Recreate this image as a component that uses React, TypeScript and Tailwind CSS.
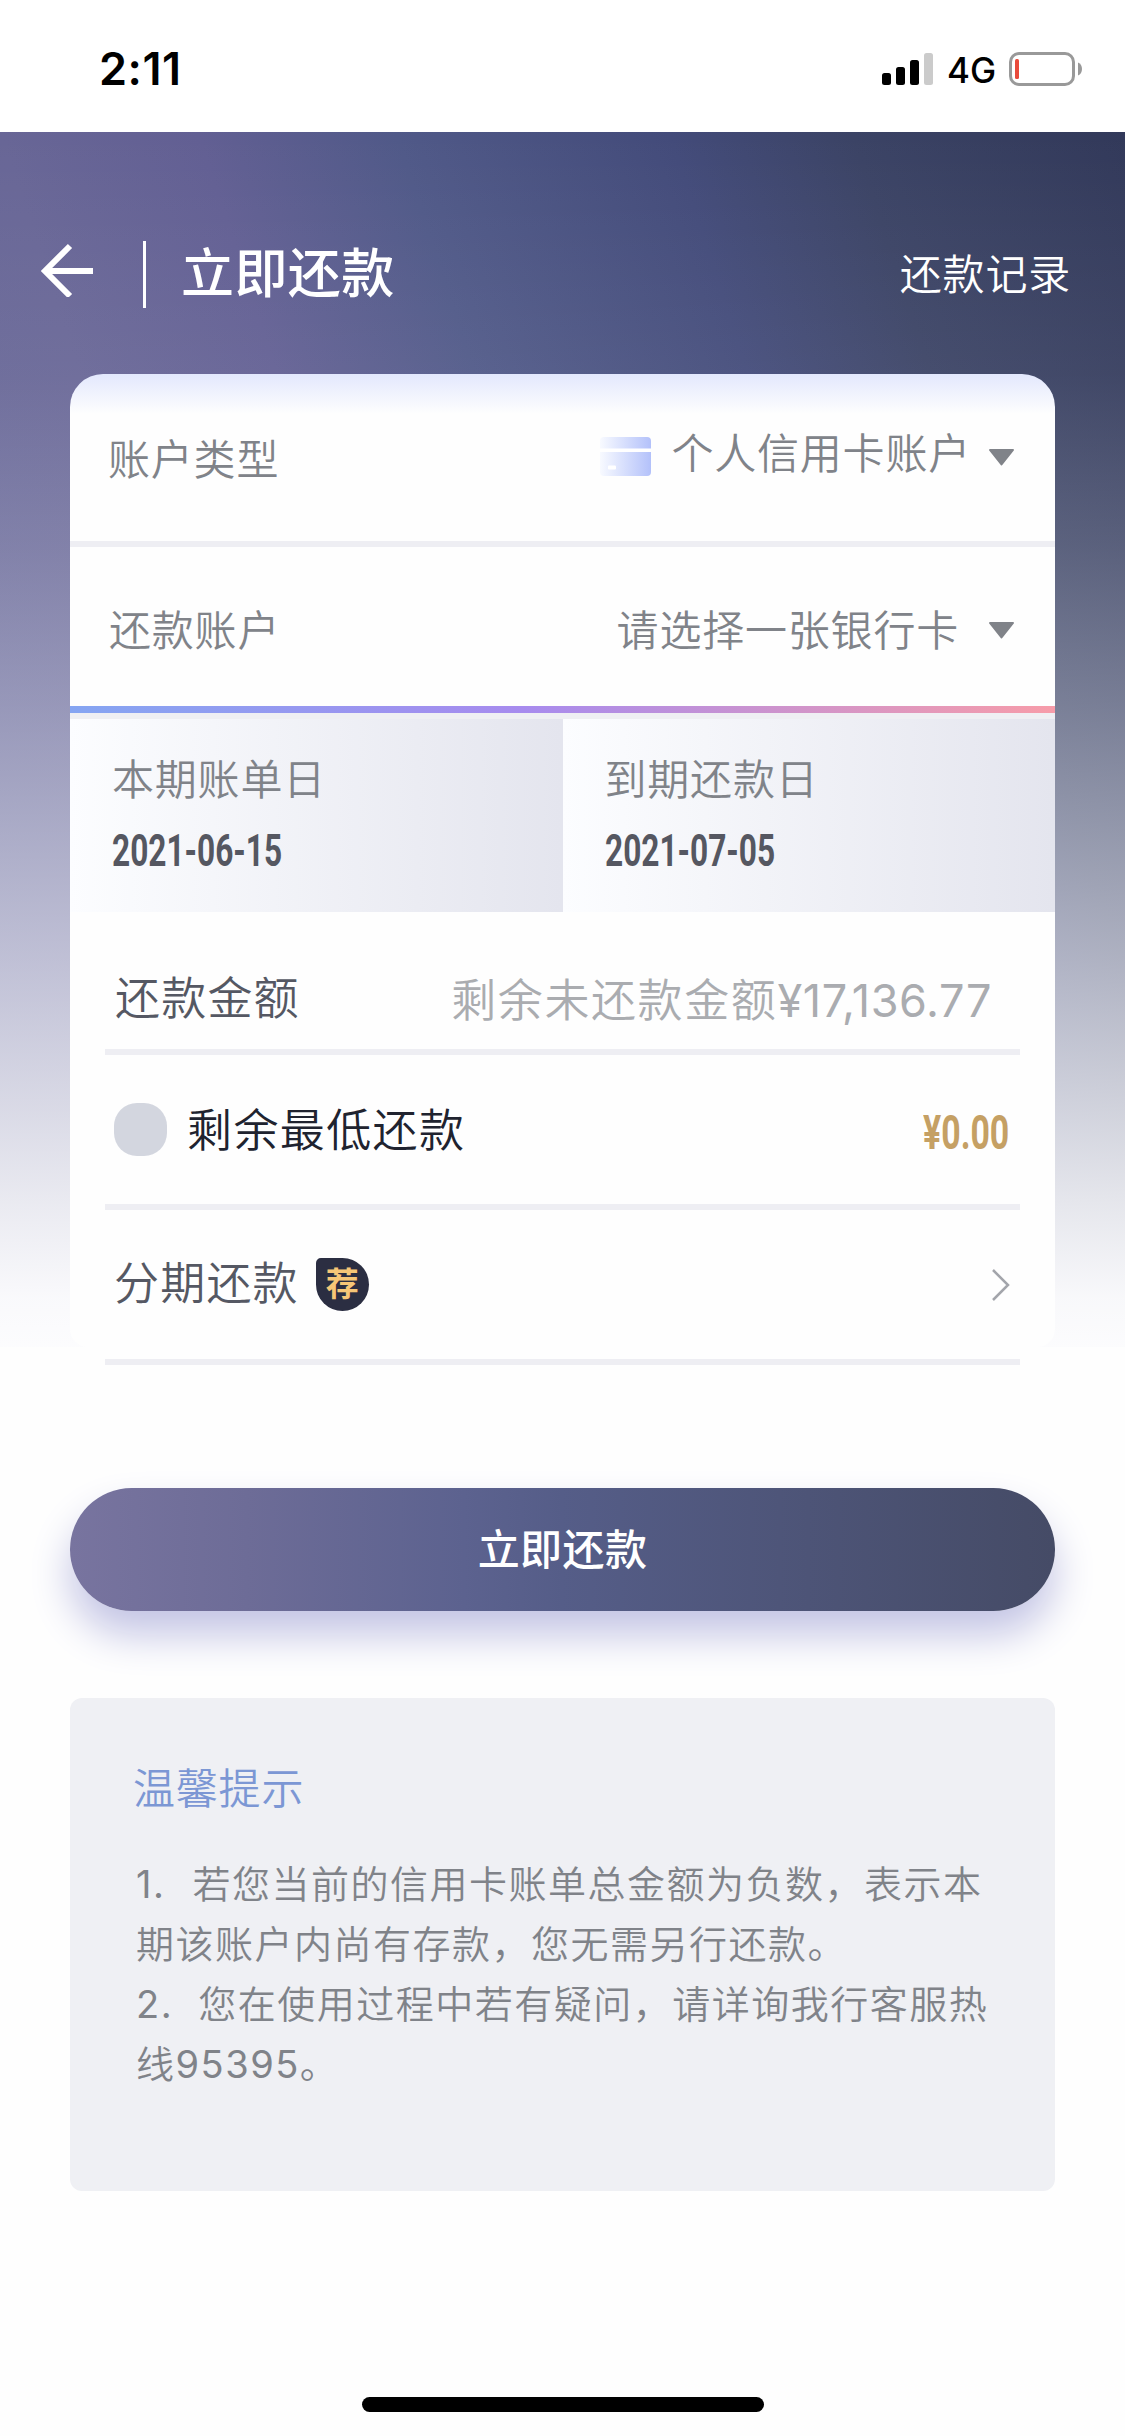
import type { ReactNode } from 'react';

interface BillDate {
  label: string;
  value: string;
}

const billDates: BillDate[] = [
  { label: '本期账单日', value: '2021-06-15' },
  { label: '到期还款日', value: '2021-07-05' },
];

const StatusBar = () => (
  <div className="flex h-[132px] items-start justify-between bg-white pl-[99px] pr-[43px]">
    <span className="mt-[42px] text-[45px] leading-[54px] font-semibold tracking-[0.5px] text-black">2:11</span>
    <div className="mt-[52px] flex h-[34px] items-center">
      <svg className="h-[34px] w-[51px]" viewBox="0 0 51 34">
        <rect x="0" y="21" width="9" height="12" rx="2.5" fill="#000" />
        <rect x="14" y="15" width="9" height="18" rx="2.5" fill="#000" />
        <rect x="28" y="8" width="9" height="25" rx="2.5" fill="#000" />
        <rect x="42" y="1" width="9" height="32" rx="2.5" fill="#cbcbcb" />
      </svg>
      <span className="ml-[14px] w-[62px] pt-[2px] text-[35px] leading-[34px] font-[450] text-black">4G</span>
      <svg className="h-[34px] w-[73px]" viewBox="0 0 73 34">
        <rect x="1.5" y="1.5" width="63" height="31" rx="8.5" fill="none" stroke="#999" strokeWidth="3" />
        <rect x="6" y="7" width="4" height="20" rx="1.5" fill="#e94b3c" />
        <path d="M69 10.500v13c2.700-1 4-3.600 4-6.500s-1.300-5.500-4-6.500z" fill="#999" />
      </svg>
    </div>
  </div>
);

const Header = () => (
  <header className="flex h-[242px] items-start justify-between pl-[40px] pr-[54px]">
    <div className="flex items-center pt-[109px]">
      <button className="mb-[10px]">
        <svg className="h-[54px] w-[54px]" viewBox="0 0 54 54" fill="none" stroke="#fff" strokeWidth="6">
          <path d="M30 3 5 28l25 25M6 28h47" />
        </svg>
      </button>
      <div className="ml-[49px] h-[67px] w-[3px] bg-white" />
      <h1 className="ml-[35px] text-[53px] leading-[67px] font-medium tracking-[0.4px] text-white">立即还款</h1>
    </div>
    <a className="mt-[113px] text-[42px] leading-[60px] font-[350] tracking-[0.8px] text-white">还款记录</a>
  </header>
);

const CardIcon = () => (
  <svg className="mb-[3px] h-[39px] w-[51px]" viewBox="0 0 51 39">
    <defs>
      <linearGradient id="card" x1="0" x2="1" y1="0" y2="0">
        <stop offset="0" stopColor="#f8faff" />
        <stop offset="1" stopColor="#b3c1fa" />
      </linearGradient>
    </defs>
    <rect width="51" height="39" rx="4" fill="url(#card)" />
    <rect y="11.500" width="51" height="3.500" fill="#fff" />
    <rect x="8" y="28.500" width="8" height="4" rx="1" fill="#fff" />
  </svg>
);

const Caret = () => (
  <svg className="h-[17px] w-[27px]" viewBox="0 0 27 17">
    <path d="M2 1h23L13.500 15.500z" fill="#808389" stroke="#808389" strokeWidth="2" strokeLinejoin="round" />
  </svg>
);

const Line = () => <div className="mx-[35px] h-[6px] bg-[#eeeef3]" />;

const Row = ({ className, children }: { className: string; children: ReactNode }) => (
  <div className={`flex items-center justify-between ${className}`}>{children}</div>
);

const RepayCard = () => (
  <section className="mx-[70px] h-[973px] rounded-t-[33px] rounded-b-[18px] bg-[linear-gradient(#e3e8fd,#fefefe_40px)] text-[42px] font-[350] tracking-[0.8px] text-[#808389]">
    <Row className="h-[167px] pl-[38px] pr-[40px]">
      <span className="pt-[4px] leading-[60px]">账户类型</span>
      <div className="flex items-center">
        <CardIcon />
        <span className="mb-[8px] ml-[20px] mr-[17px] leading-[60px]">个人信用卡账户</span>
        <Caret />
      </div>
    </Row>
    <div className="h-[6px] bg-[#eeeef3]" />
    <Row className="h-[159px] pl-[39px] pr-[40px]">
      <span className="pt-[8px] leading-[60px]">还款账户</span>
      <div className="flex items-center pt-[8px]">
        <span className="mr-[29px] leading-[60px]">请选择一张银行卡</span>
        <Caret />
      </div>
    </Row>
    <div className="h-[7px] bg-[linear-gradient(90deg,#85a5f2,#a78bee_46%,#f79ca9)]" />
    <div className="h-[6px] bg-[#efeff3]" />
    <div className="flex h-[193px]">
      {billDates.map((item) => (
        <div key={item.label} className="flex-1 bg-linear-to-r from-[#fcfdff] to-[#e4e5ee] pl-[42px] pt-[31px]">
          <p className="leading-[60px]">{item.label}</p>
          <p className="mt-[13px] w-max origin-left scale-x-[0.703] font-[Roboto] text-[45px] leading-[56px] font-bold tracking-normal text-[#555761]">
            {item.value}
          </p>
        </div>
      ))}
    </div>

    <Row className="h-[137px] pl-[45px] pr-[63px] pt-[37px] text-[45px] tracking-[1.2px]">
      <span className="text-[#555863]">还款金额</span>
      <span className="pt-[4px] text-[#aaacb0] tracking-[1.6px]">
        剩余未还款金额<span className="font-normal tracking-[0.6px]">¥17,136.77</span>
      </span>
    </Row>
    <Line />
    <Row className="h-[149px] pl-[44px] pr-[46px]">
      <div className="flex items-center">
        <div className="h-[53px] w-[53px] rounded-[23px] bg-[#d3d6df]" />
        <span className="ml-[20px] pt-[3px] text-[45px] tracking-[1.4px] text-[#20232f]">剩余最低还款</span>
      </div>
      <span className="w-max origin-right scale-x-[0.705] pt-[6px] font-[Roboto] text-[48px] font-bold tracking-normal text-[#c5a064]">¥0.00</span>
    </Row>
    <Line />
    <Row className="h-[149px] pl-[44px] pr-[44px]">
      <div className="flex items-center">
        <span className="pb-[2px] text-[45px] tracking-[1.2px] text-[#555863]">分期还款</span>
        <span className="ml-[17px] flex h-[53px] w-[53px] items-center justify-center rounded-[27px] rounded-tl-[5px] bg-[#2b2e42] text-[33px] leading-none font-bold tracking-normal text-[#f6c677]">
          荐
        </span>
      </div>
      <svg className="h-[32px] w-[20px]" viewBox="0 0 20 32" fill="none" stroke="#a3a5ab" strokeWidth="2.500">
        <path d="M2 1l15 15L2 31" />
      </svg>
    </Row>
    <Line />
  </section>
);

const Tips = () => (
  <section className="mx-[70px] mt-[87px] h-[493px] rounded-[12px] bg-[#eff0f4] pl-[66px] pt-[61px] font-[350]">
    <h2 className="-ml-[3px] text-[42px] leading-[60px] tracking-[0.8px] text-[#7c97d4]">温馨提示</h2>
    <div className="mt-[35px] text-[38px] leading-[60px] tracking-[1.5px] whitespace-pre text-[#808389]">
      <p><span className="mr-[27px] font-normal">1.</span>若您当前的信用卡账单总金额为负数，表示本</p>
      <p>期该账户内尚有存款，您无需另行还款。</p>
      <p><span className="mr-[25px] font-normal">2.</span>您在使用过程中若有疑问，请详询我行客服热</p>
      <p>线<span className="font-normal">95395</span>。</p>
    </div>
  </section>
);

const App = () => {
  return (
    <div className="flex h-[2436px] w-[1125px] flex-col overflow-hidden bg-[#fefefe] font-[Inter,'Noto_Sans_CJK_SC',sans-serif]">
      <StatusBar />
      <div className="h-[1215px] bg-[linear-gradient(rgba(250,251,255,0)_0%,rgba(250,251,255,0.06)_20%,rgba(250,251,255,0.18)_34%,rgba(250,251,255,0.33)_47%,rgba(250,251,255,0.46)_57%,rgba(251,251,255,0.6)_68%,rgba(251,251,253,0.74)_78%,rgba(252,252,253,0.88)_88%,rgba(254,254,255,0.97)_96%,rgba(254,254,255,0.99)_100%),linear-gradient(72deg,#646798_0%,#686696_26%,#625f93_39%,#505988_52%,#434b7a_70%,#3b4365_82%,#32395a_100%)]">
        <Header />
        <RepayCard />
      </div>
      <button className="mx-[70px] mt-[141px] h-[123px] shrink-0 rounded-full bg-[linear-gradient(90deg,#78749f,#6d6c97_18%,#5c628f_40%,#555d88_50%,#454b66)] text-[42px] font-medium tracking-[0.4px] text-white shadow-[0_24px_40px_#c3c4e4]">
        立即还款
      </button>
      <Tips />
      <div className="mx-auto mt-[206px] h-[15px] w-[402px] rounded-full bg-black" />
    </div>
  );
};

export default App;
